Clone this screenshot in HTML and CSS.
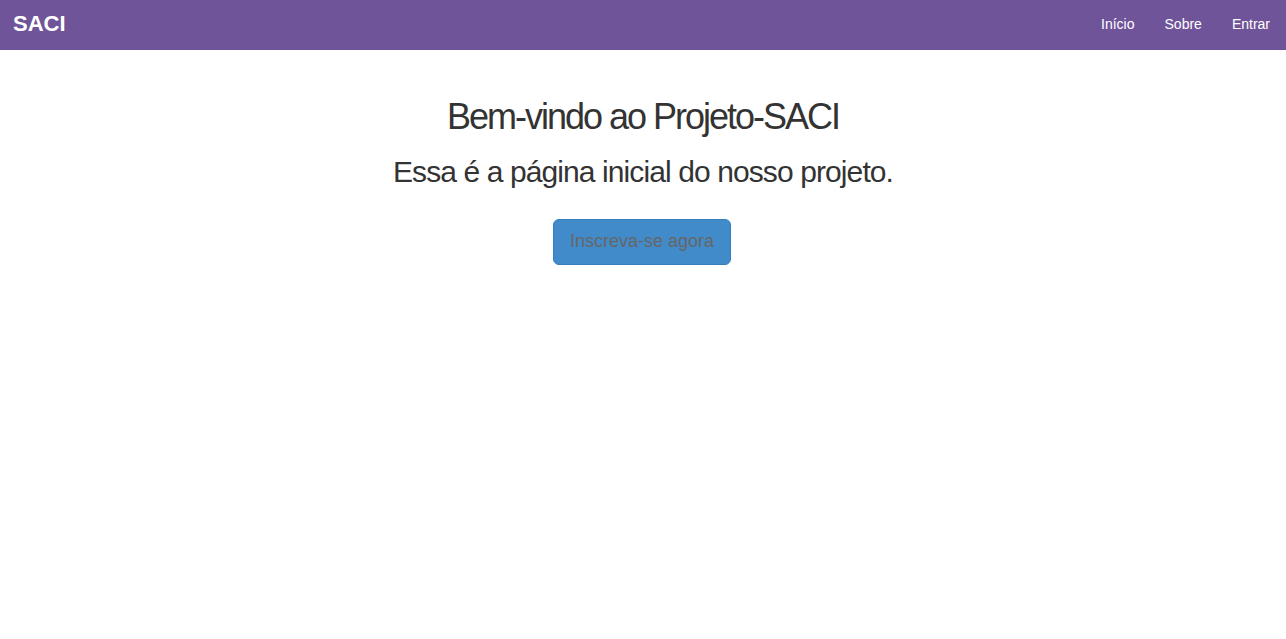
FILE: index.html
```html
<!DOCTYPE html>
<html lang="pt">
<head>
<meta charset="utf-8">
<title>SACI</title>
<link rel="stylesheet" href="styles.css">
</head>
<body>
<nav class="navbar">
  <a class="brand" href="#">SACI</a>
  <ul class="nav">
    <li><a href="#">Início</a></li>
    <li><a href="#">Sobre</a></li>
    <li><a href="#">Entrar</a></li>
  </ul>
</nav>
<main class="hero">
  <h1 class="title">Bem-vindo ao Projeto-SACI</h1>
  <h2 class="subtitle">Essa é a página inicial do nosso projeto.</h2>
  <a class="btn" href="#">Inscreva-se agora</a>
</main>
</body>
</html>
```
FILE: styles.css
```css
* { box-sizing: border-box; }
html, body { margin: 0; padding: 0; }
body {
  font-family: "Liberation Sans", Arial, sans-serif;
  font-size: 14px;
  line-height: 1.42857;
  color: #333;
  background: #fff;
}
.navbar {
  height: 50px;
  background: #6f5499;
  display: flex;
  align-items: center;
  justify-content: space-between;
  padding: 0 1px 0 13px;
}
.brand {
  color: #fff;
  font-weight: bold;
  font-size: 22px;
  letter-spacing: 0;
  text-decoration: none;
  line-height: 20px;
  margin-top: -2px;
}
.nav {
  list-style: none;
  margin: 0;
  padding: 0;
  display: flex;
}
.nav a {
  display: block;
  padding: 14px 15px 16px;
  line-height: 20px;
  color: #fff;
  text-decoration: none;
}
.hero {
  display: flex;
  flex-direction: column;
  align-items: center;
  padding-top: 27px;
}
.title {
  font-size: 36px;
  font-weight: 500;
  letter-spacing: -2px;
  line-height: 1.1;
  margin: 20px 0 18px;
}
.subtitle {
  font-size: 30px;
  font-weight: 500;
  letter-spacing: -0.9px;
  line-height: 1.1;
  margin: 0 0 16px;
}
.btn {
  margin-top: 15px;
  margin-right: 2px;
  display: inline-block;
  padding: 10px 16px;
  font-size: 18px;
  line-height: 1.3333;
  border: 1px solid #357ebd;
  border-radius: 6px;
  background: #428bca;
  color: #666;
  text-decoration: none;
}
```
